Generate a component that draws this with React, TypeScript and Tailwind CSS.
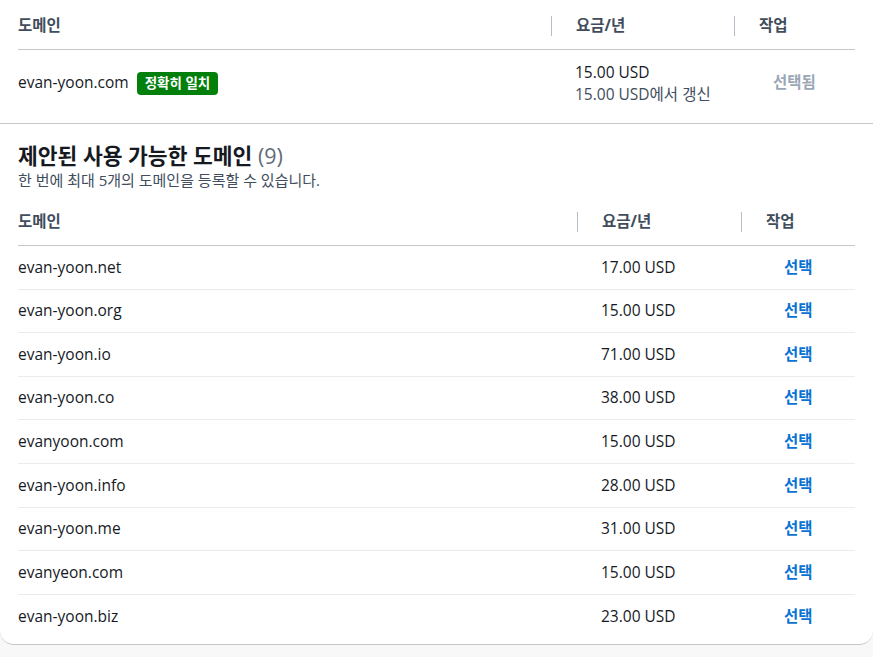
const font = { fontFamily: '"Open Sans", "Noto Sans CJK KR", sans-serif' };

const rows: [string, string][] = [
  ['evan-yoon.net', '17.00 USD'],
  ['evan-yoon.org', '15.00 USD'],
  ['evan-yoon.io', '71.00 USD'],
  ['evan-yoon.co', '38.00 USD'],
  ['evanyoon.com', '15.00 USD'],
  ['evan-yoon.info', '28.00 USD'],
  ['evan-yoon.me', '31.00 USD'],
  ['evanyeon.com', '15.00 USD'],
  ['evan-yoon.biz', '23.00 USD'],
];

function Head({ cols }: { cols: string }) {
  return (
    <div className={`grid ${cols} h-[48px] items-center border-b border-[#c6c6cd] text-[15.5px] font-bold text-[#414d5c]`}>
      <div>도메인</div>
      <div className="flex items-center"><span className="h-[20px] w-px bg-[#b6bec9]" /><span className="pl-6">요금/년</span></div>
      <div className="flex items-center"><span className="h-[20px] w-px bg-[#b6bec9]" /><span className="pl-6">작업</span></div>
    </div>
  );
}

export default function App() {
  return (
    <div className="min-h-[657px] bg-[#f8f8f8] text-[#16191f]" style={font}>
      <div className="bg-white border-b border-[#c6c6cd] rounded-b-[14px] pb-[6px]">
        <div className="px-[18px] pt-[2px]">
          <Head cols="grid-cols-[533px_183px_1fr]" />
          <div className="grid grid-cols-[533px_183px_1fr] h-[73px] pb-[7px] items-center text-[15.5px]">
            <div className="flex items-center gap-2">
              <span>evan-yoon.com</span>
              <span className="bg-[#037f0c] text-white text-[13.5px] font-bold rounded-[4px] px-2 leading-[23px]">정확히 일치</span>
            </div>
            <div className="pl-6 leading-[22px]">
              <div>15.00 USD</div>
              <div className="text-[#414d5c]">15.00 USD에서 갱신</div>
            </div>
            <div className="pl-[39px] font-bold text-[#9ba7b6]">선택됨</div>
          </div>
        </div>
        <div className="border-t border-[#c6c6cd] px-[18px] pt-[18px]">
          <h2 className="text-[21.5px] font-bold leading-[28px]">제안된 사용 가능한 도메인 <span className="font-normal text-[#5f6b7a]">(9)</span></h2>
          <p className="text-[15px] text-[#414d5c] leading-[20px]">한 번에 최대 5개의 도메인을 등록할 수 있습니다.</p>
          <div className="mt-[8px]">
            <Head cols="grid-cols-[559px_164px_1fr]" />
            {rows.map(([d, p], i) => (
              <div key={d} className={`grid grid-cols-[559px_164px_1fr] h-[43.6px] items-center text-[15.5px] ${i < rows.length - 1 ? 'border-b border-[#e9ebed]' : ''}`}>
                <div>{d}</div>
                <div className="pl-6">{p}</div>
                <div className="pl-[43px] font-bold text-[#0972d3]">선택</div>
              </div>
            ))}
          </div>
        </div>
      </div>
    </div>
  );
}
